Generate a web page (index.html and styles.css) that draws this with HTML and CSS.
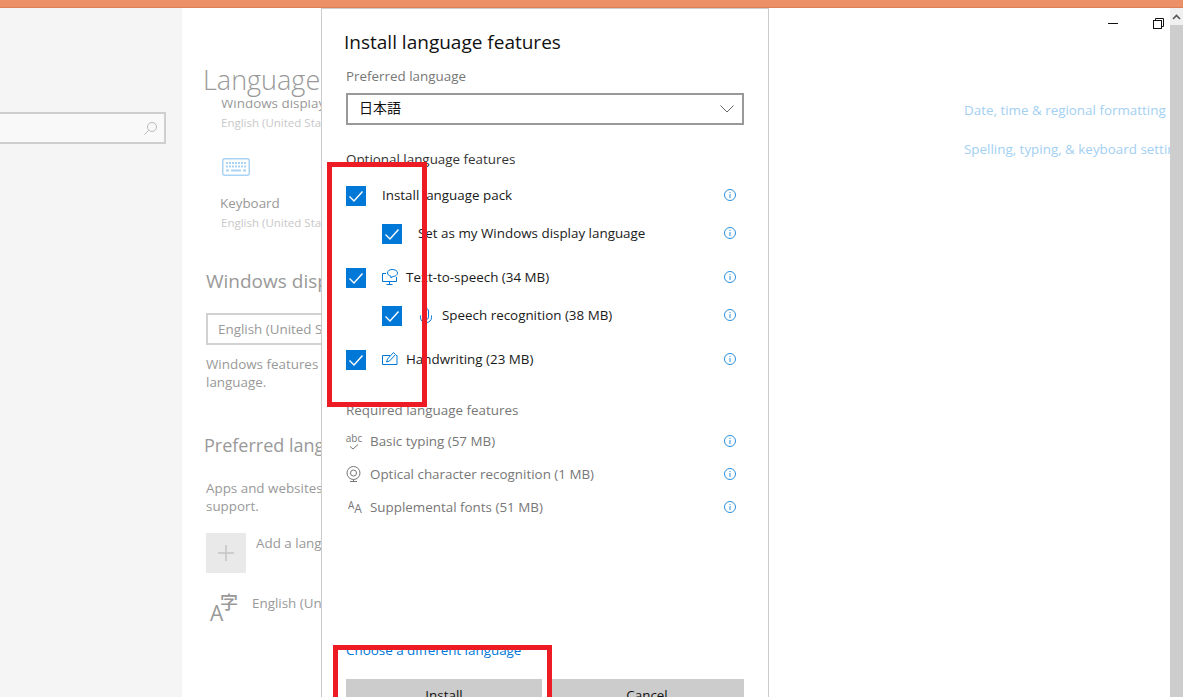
FILE: index.html
```html
<!DOCTYPE html>
<html lang="en">
<head>
  <meta charset="UTF-8" />
  <title>Install language features</title>
  <link rel="stylesheet" href="styles.css">
</head>
<body>

<div class="window">
  <div class="titlebar"></div>

  <div class="main">
    <div class="sidebar">
      <div class="search">
        <svg class="search-icon" width="13" height="13" viewBox="0 0 13 13" fill="none" stroke="#bbb" stroke-width="1"><circle cx="8" cy="5" r="4.5"/><path d="M4.800 8.200 .5 12.500"/></svg>
      </div>
    </div>

    <div class="content">
      <h1 class="page-title">Language</h1>
      <div class="tile-name cut">Windows display language</div>
      <div class="tile-sub">English (United States)</div>
      <svg class="keyboard" width="28" height="18" viewBox="0 0 28 18" fill="none">
        <rect x="0.75" y="0.75" width="26.5" height="16.5" rx="2" stroke="#a9d4f4" stroke-width="1.5"/>
        <path d="M4 5h20M4 8.500h20" stroke="#a9d4f4" stroke-width="2" stroke-dasharray="2 1"/>
        <path d="M4 12.500h3M9 12.500h10M21 12.500h3" stroke="#a9d4f4" stroke-width="2"/>
      </svg>
      <div class="tile-name keyboard-name">Keyboard</div>
      <div class="tile-sub">English (United States)</div>

      <h2 class="section-title display-title">Windows display language</h2>
      <div class="fake-select">English (United States)</div>
      <p class="note">Windows features like Settings and File Explorer will appear in this<br>language.</p>

      <h2 class="section-title pref-title">Preferred languages</h2>
      <p class="note pref-note">Apps and websites will appear in the first language in the list that they<br>support.</p>

      <div class="add-row">
        <div class="add-tile">
          <svg width="16" height="16" viewBox="0 0 16 16" stroke="#c4c4c4" stroke-width="1.5"><path d="M8 0v16M0 8h16"/></svg>
        </div>
        <span>Add a language</span>
      </div>
      <div class="lang-row">
        <div class="lang-glyph"><span class="glyph-a">A</span><span class="glyph-zi">字</span></div>
        <span>English (United States)</span>
      </div>
    </div>

    <div class="aside">
      <div class="win-controls">
        <span class="win-min"></span>
        <svg width="11" height="11" viewBox="0 0 11 11" fill="none" stroke="#111" stroke-width="1"><rect x="0.5" y="2.500" width="8" height="8"/><path d="M2.500 2.500v-2h8v8h-2"/></svg>
      </div>
      <a class="side-link first">Date, time &amp; regional formatting</a>
      <a class="side-link">Spelling, typing, &amp; keyboard settings</a>
    </div>

    <div class="scrollbar">
      <div class="scroll-up">
        <svg width="9" height="6" viewBox="0 0 9 6" fill="none" stroke="#555" stroke-width="1.6"><path d="M1 5 4.500 1.500 8 5"/></svg>
      </div>
    </div>
  </div>

  <div class="dialog">
    <h2 class="dialog-title">Install language features</h2>
    <div class="label">Preferred language</div>
    <div class="select">
      <span class="select-text">日本語</span>
      <svg width="14" height="8" viewBox="0 0 14 8" fill="none" stroke="#666" stroke-width="1"><path d="M.5.5 7 7 13.500.5"/></svg>
    </div>

    <div class="group-label optional">Optional language features</div>

    <div class="row r1">
      <span class="check"><svg width="20" height="20" viewBox="0 0 20 20" fill="none" stroke="#fff" stroke-width="1.4"><path d="M3.500 10.500 8 15 16.500 5.500"/></svg></span>
      <span class="row-text">Install language pack</span>
      <svg class="info" width="12" height="12" viewBox="0 0 12 12" fill="none" stroke="#2a8fdc"><circle cx="6" cy="6" r="5.500"/><path d="M6 5v4M6 3v1"/></svg>
    </div>
    <div class="row r2 sub">
      <span class="check"><svg width="20" height="20" viewBox="0 0 20 20" fill="none" stroke="#fff" stroke-width="1.4"><path d="M3.500 10.500 8 15 16.500 5.500"/></svg></span>
      <span class="row-text">Set as my Windows display language</span>
      <svg class="info" width="12" height="12" viewBox="0 0 12 12" fill="none" stroke="#2a8fdc"><circle cx="6" cy="6" r="5.500"/><path d="M6 5v4M6 3v1"/></svg>
    </div>
    <div class="row r3">
      <span class="check"><svg width="20" height="20" viewBox="0 0 20 20" fill="none" stroke="#fff" stroke-width="1.4"><path d="M3.500 10.500 8 15 16.500 5.500"/></svg></span>
      <svg class="feature-icon" width="16" height="16" viewBox="0 0 16 16" fill="none" stroke="#0078d7"><path d="M4 4.500H.5v8h14V8M7.500 12.500v2.500M4.500 15.500h6"/><path d="M10 .5c3 0 5.500 1.200 5.500 3.500s-2.500 3.500-4.500 3.500l-2 1.500v-1.800c-2-.4-3.500-1.500-3.500-3.200C5.500 1.800 7.500.5 10 .5z"/></svg>
      <span class="row-text">Text-to-speech (34 MB)</span>
      <svg class="info" width="12" height="12" viewBox="0 0 12 12" fill="none" stroke="#2a8fdc"><circle cx="6" cy="6" r="5.500"/><path d="M6 5v4M6 3v1"/></svg>
    </div>
    <div class="row r4 sub">
      <span class="check"><svg width="20" height="20" viewBox="0 0 20 20" fill="none" stroke="#fff" stroke-width="1.4"><path d="M3.500 10.500 8 15 16.500 5.500"/></svg></span>
      <svg class="feature-icon mic" width="12" height="16" viewBox="0 0 12 16" fill="none" stroke="#0078d7"><rect x="3.500" y=".5" width="5" height="11" rx="2.500"/><path d="M.5 7.500v2a5 5 0 0 0 5 5h1a5 5 0 0 0 5-5v-2M6 14.500v1"/></svg>
      <span class="row-text">Speech recognition (38 MB)</span>
      <svg class="info" width="12" height="12" viewBox="0 0 12 12" fill="none" stroke="#2a8fdc"><circle cx="6" cy="6" r="5.500"/><path d="M6 5v4M6 3v1"/></svg>
    </div>
    <div class="row r5">
      <span class="check"><svg width="20" height="20" viewBox="0 0 20 20" fill="none" stroke="#fff" stroke-width="1.4"><path d="M3.500 10.500 8 15 16.500 5.500"/></svg></span>
      <svg class="feature-icon" width="16" height="16" viewBox="0 0 16 16" fill="none" stroke="#0078d7"><path d="M8 4.500H.5v9h14.500v-9h-1"/><path d="M4.500 11 5.500 8 11.500 1.500l2 2-6 6.500z"/></svg>
      <span class="row-text">Handwriting (23 MB)</span>
      <svg class="info" width="12" height="12" viewBox="0 0 12 12" fill="none" stroke="#2a8fdc"><circle cx="6" cy="6" r="5.500"/><path d="M6 5v4M6 3v1"/></svg>
    </div>

    <div class="group-label required">Required language features</div>

    <div class="row req first-req">
      <span class="req-icon abc">abc<svg width="10" height="6" viewBox="0 0 10 6" fill="none" stroke="#777"><path d="M1 2.500 4 5 9 .5"/></svg></span>
      <span class="row-text">Basic typing (57 MB)</span>
      <svg class="info" width="12" height="12" viewBox="0 0 12 12" fill="none" stroke="#2a8fdc"><circle cx="6" cy="6" r="5.500"/><path d="M6 5v4M6 3v1"/></svg>
    </div>
    <div class="row req">
      <span class="req-icon"><svg width="15" height="16" viewBox="0 0 15 16" fill="none" stroke="#777"><circle cx="7.500" cy="7" r="6.500"/><circle cx="7.500" cy="7" r="3"/><path d="M4 15.500h7M7.500 13.500v2"/></svg></span>
      <span class="row-text">Optical character recognition (1 MB)</span>
      <svg class="info" width="12" height="12" viewBox="0 0 12 12" fill="none" stroke="#2a8fdc"><circle cx="6" cy="6" r="5.500"/><path d="M6 5v4M6 3v1"/></svg>
    </div>
    <div class="row req">
      <span class="req-icon fonts"><span class="aa-small">A</span><span class="aa-big">A</span></span>
      <span class="row-text">Supplemental fonts (51 MB)</span>
      <svg class="info" width="12" height="12" viewBox="0 0 12 12" fill="none" stroke="#2a8fdc"><circle cx="6" cy="6" r="5.500"/><path d="M6 5v4M6 3v1"/></svg>
    </div>

    <a class="choose-link">Choose a different language</a>

    <div class="buttons">
      <button class="btn btn-install">Install</button>
      <button class="btn">Cancel</button>
    </div>
  </div>

  <div class="mark mark-options"></div>
  <div class="mark mark-install"></div>
</div>

</body>
</html>
```

FILE: styles.css
```css
* {
  box-sizing: border-box;
}

html, body {
  margin: 0;
  height: 100%;
  overflow: hidden;
}

body {
  font-family: "Open Sans", "Noto Sans CJK JP", sans-serif;
  font-size: 13.4px;
  line-height: 20px;
  background: #fff;
}

.window {
  position: relative;
  width: 1183px;
  height: 697px;
  overflow: hidden;
  display: flex;
  flex-direction: column;
}

.titlebar {
  height: 8px;
  flex: none;
  background: #ec9068;
  border-bottom: 1px solid #d98059;
}

.main {
  flex: 1;
  display: flex;
  min-height: 0;
}

/* left pane */
.sidebar {
  width: 182px;
  flex: none;
  background: #f5f5f5;
  padding-top: 104px;
}

.search {
  width: 166px;
  height: 32px;
  border: 2px solid #cfcfcf;
  border-left: 0;
  background: #f9f9f9;
  display: flex;
  align-items: center;
  justify-content: flex-end;
  padding-right: 7px;
}

/* faded page behind the dialog */
.content {
  width: 782px;
  flex: none;
  padding-left: 24px;
  color: #999;
  white-space: nowrap;
  overflow: hidden;
}

.page-title {
  margin: 52px 0 0 -3px;
  height: 40px;
  line-height: 40px;
  font-size: 27px;
  font-weight: 300;
  color: #999;
  position: relative;
  background: #fff;
  z-index: 1;
}

.tile-name {
  margin-left: 15px;
  color: #999;
}

.tile-name.cut {
  margin-top: -7px;
}

.tile-sub {
  margin-left: 15px;
  font-size: 11.5px;
  color: #c8c8c8;
}

.keyboard {
  display: block;
  margin: 25px 0 0 16px;
}

.keyboard-name {
  margin-top: 17px;
  margin-left: 14px;
}

.section-title {
  margin: 0;
  font-size: 19px;
  font-weight: 400;
  height: 28px;
  line-height: 28px;
  color: #999;
}

.display-title {
  margin-top: 34px;
}

.fake-select {
  margin-top: 18px;
  width: 400px;
  height: 32px;
  border: 2px solid #d2d2d2;
  padding-left: 10px;
  line-height: 28px;
}

.note {
  margin: 0;
  line-height: 18px;
}

.fake-select + .note {
  margin-top: 10px;
}

.pref-title {
  margin-top: 40px;
  margin-left: -2px;
  font-size: 18px;
}

.pref-note {
  margin-top: 20px;
}

.add-row {
  display: flex;
  margin-top: 18px;
  line-height: 20px;
}

.add-tile {
  width: 40px;
  height: 40px;
  background: #e9e9e9;
  margin-right: 10px;
  display: flex;
  align-items: center;
  justify-content: center;
}

.lang-row {
  display: flex;
  margin-top: 20px;
}

.lang-glyph {
  position: relative;
  width: 46px;
  height: 32px;
  color: #999;
}

.glyph-a {
  position: absolute;
  left: 4px;
  top: 10px;
  font-size: 21px;
}

.glyph-zi {
  position: absolute;
  left: 14px;
  top: 0;
  font-size: 18px;
  line-height: 18px;
  font-weight: 500;
}

/* right links */
.aside {
  flex: 1;
  min-width: 0;
  overflow: hidden;
  white-space: nowrap;
}

.win-controls {
  height: 22px;
  margin-top: 4px;
  display: flex;
  align-items: center;
  justify-content: flex-end;
  gap: 35px;
  padding-right: 6px;
}

.win-min {
  width: 10px;
  height: 1px;
  background: #111;
}

.side-link {
  display: block;
  color: #a3d0f2;
  margin-top: 19px;
}

.side-link.first {
  margin-top: 66px;
}

.scrollbar {
  width: 13px;
  flex: none;
  background: #cdcdcd;
}

.scroll-up {
  height: 17px;
  background: #f0f0f0;
  display: flex;
  align-items: center;
  justify-content: center;
}

/* dialog */
.dialog {
  position: absolute;
  z-index: 2;
  top: 8px;
  left: 321px;
  width: 448px;
  height: 740px;
  background: #fff;
  border: 1px solid #ccc;
  padding: 19px 24px 0;
  color: #1a1a1a;
}

.dialog-title {
  margin: 0 0 0 -2px;
  font-size: 19px;
  font-weight: 400;
  line-height: 28px;
  color: #111;
}

.label {
  margin-top: 10px;
  color: #777;
}

.select {
  margin-top: 7px;
  height: 32px;
  border: 2px solid #999;
  display: flex;
  align-items: center;
  justify-content: space-between;
  padding: 0 8px 0 11px;
  color: #111;
}

.select-text {
  font-size: 14px;
  margin-bottom: 2px;
}

.group-label {
  color: #333;
}

.optional {
  margin-top: 24px;
}

.required {
  margin-top: 30px;
  color: #777;
}

.row {
  display: flex;
  align-items: center;
  height: 20px;
}

.r1 { margin-top: 17px; }
.r2 { margin-top: 18px; }
.r3 { margin-top: 24px; }
.r4 { margin-top: 18px; }
.r5 { margin-top: 24px; }

.row-text,
.info,
.feature-icon {
  margin-bottom: 2px;
}

.sub {
  padding-left: 36px;
}

.check {
  width: 20px;
  height: 20px;
  flex: none;
  background: #0078d7;
  margin-right: 16px;
}

.check svg {
  display: block;
}

.feature-icon {
  flex: none;
  margin-right: 8px;
}

.feature-icon.mic {
  margin: 0 10px 0 2px;
}

.info {
  flex: none;
  margin-left: auto;
  margin-right: 8px;
}

.req {
  margin-top: 13px;
  color: #777;
}

.req .row-text,
.req .info {
  margin-bottom: 0;
}

.first-req {
  margin-top: 11px;
}

.req-icon {
  position: relative;
  width: 16px;
  height: 20px;
  flex: none;
  margin-right: 8px;
  display: flex;
  align-items: center;
  color: #777;
}

.abc {
  flex-direction: column;
  font-size: 10px;
  line-height: 10px;
  padding-top: 2px;
}

.abc svg {
  display: block;
  margin-top: 1px;
}

.fonts {
  padding-left: 2px;
}

.aa-small {
  font-size: 10px;
  line-height: 10px;
  margin-bottom: 4px;
}

.aa-big {
  font-size: 12px;
  line-height: 12px;
  margin-top: 3px;
}

.choose-link {
  display: block;
  margin-top: 123px;
  color: #0078d7;
}

.buttons {
  display: flex;
  gap: 8px;
  margin-top: 19px;
}

.btn {
  flex: 1;
  height: 32px;
  border: 0;
  padding: 0;
  background: #ccc;
  color: #111;
  font: inherit;
}

.btn-install {
  flex: none;
  width: 196px;
}

/* red annotation boxes drawn over the screenshot */
.mark {
  position: absolute;
  z-index: 3;
  border: 5px solid #ed1c24;
  pointer-events: none;
}

.mark-options {
  left: 327px;
  top: 162px;
  width: 100px;
  height: 245px;
}

.mark-install {
  left: 333px;
  top: 645px;
  width: 219px;
  height: 80px;
}
```
